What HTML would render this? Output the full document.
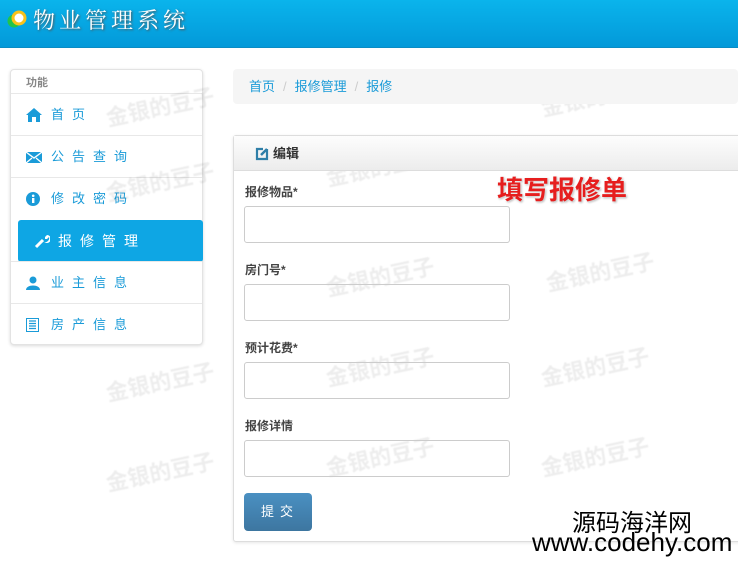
<!DOCTYPE html>
<html><head><meta charset="utf-8"><style>
*{margin:0;padding:0;box-sizing:border-box}
body{width:738px;height:563px;overflow:hidden;background:#fff;font-family:"Liberation Sans","Noto Sans CJK SC",sans-serif;position:relative;font-size:13px}
.hd{position:absolute;left:0;top:0;width:738px;height:48px;background:linear-gradient(#0ab4ec,#0399d9);border-bottom:1px solid #0a8cc4}
.hd .t{position:absolute;left:33px;top:4px;color:#fff;font-family:"Noto Serif CJK SC",serif;font-size:22px;letter-spacing:4px;text-shadow:1px 1px 2px #555}
.side{position:absolute;left:10px;top:69px;width:193px;height:276px;border:1px solid #e3e3e3;border-radius:4px;background:#fff;box-shadow:0 1px 3px rgba(0,0,0,.15)}
.side .cap{position:absolute;left:15px;top:4px;color:#888;font-size:11px;font-weight:bold}
.it{position:absolute;left:0;width:191px;height:42px;border-top:1px solid #e8e8e8;color:#1a9bd8;font-size:13px;letter-spacing:8px;line-height:42px;padding-left:40px}
.it svg{position:absolute;left:15px;top:14px}
.act{left:7px;width:185px;background:#0ea6e4;color:#fff;border-radius:3px;border:none;padding-left:40px;font-size:14px}
.bc{position:absolute;left:233px;top:69px;width:505px;height:35px;background:#f5f5f5;border-radius:4px;color:#1a9bd8;font-size:13px;line-height:36px;padding-left:16px}
.bc span{color:#ccc;margin:0 8px}
.pn{position:absolute;left:233px;top:135px;width:510px;height:407px;border:1px solid #ddd;border-radius:3px;box-shadow:0 1px 3px rgba(0,0,0,.1)}
.ph{height:35px;background:linear-gradient(#fdfdfd,#ececec);border-bottom:1px solid #ddd;color:#333;font-weight:bold;font-size:13px;line-height:35px;padding-left:39px;position:relative}
.ph svg{position:absolute;left:21px;top:11px}
.lb{position:absolute;left:11px;color:#444;font-weight:bold;font-size:12px}
.in{position:absolute;left:10px;width:266px;height:37px;border:1px solid #ccc;border-radius:3px}
.btn{position:absolute;left:10px;top:357px;width:68px;height:38px;border-radius:4px;background:linear-gradient(#4a90c2,#3d76a0);color:#fff;font-size:13px;letter-spacing:6px;text-align:center;line-height:38px;padding-left:4px}
.red{position:absolute;left:497px;top:170px;color:#e61e1e;font-size:26px;font-weight:bold;text-shadow:0 0 3px #fff,1px 1px 2px #999}
.wm{position:absolute;color:rgba(0,0,0,.07);font-size:22px;font-weight:bold;transform:rotate(-12deg);white-space:nowrap;filter:blur(0.6px)}
.cy1{position:absolute;left:572px;top:503px;font-size:24px;color:#000}
.cy2{position:absolute;left:532px;top:527px;font-size:26px;color:#000;line-height:30px}
</style></head><body>
<div class="hd">
<svg style="position:absolute;left:5px;top:8px" width="24" height="24"><circle cx="9" cy="13" r="6.5" fill="#22c44a"/><circle cx="14" cy="10" r="6" fill="#fff" stroke="#f8c21a" stroke-width="3"/></svg>
<div class="t">物业管理系统</div></div>
<div class="side"><div class="cap">功能</div>
<div class="it" style="top:23px"><svg width="16" height="14"><path d="M8 0L0 7h2v7h4V9h4v5h4V7h2z" fill="#1a9bd8"/></svg>首页</div>
<div class="it" style="top:65px"><svg width="16" height="14"><path d="M0 2h16v11H0z" fill="#1a9bd8"/><path d="M0 2l8 6 8-6M0 13l6-5M16 13l-6-5" stroke="#fff" stroke-width="1.3" fill="none"/></svg>公告查询</div>
<div class="it" style="top:107px"><svg width="14" height="14"><circle cx="7" cy="7" r="7" fill="#1a9bd8"/><rect x="6" y="6" width="2.4" height="5" fill="#fff"/><circle cx="7.2" cy="3.8" r="1.3" fill="#fff"/></svg>修改密码</div>
<div class="it act" style="top:150px"><svg width="16" height="16" style="left:16px;top:13px"><path d="M2 14L9 7" stroke="#fff" stroke-width="3"/><path d="M9 7a4 4 0 1 0 4-5l-2 2v2h2l2-2a4 4 0 0 1-5 5" fill="#fff"/></svg>报修管理</div>
<div class="it" style="top:191px"><svg width="14" height="14"><circle cx="7" cy="4" r="3.5" fill="#1a9bd8"/><path d="M0 14c0-6 14-6 14 0z" fill="#1a9bd8"/></svg>业主信息</div>
<div class="it" style="top:233px"><svg width="13" height="14"><rect x="0.5" y="0.5" width="12" height="13" fill="none" stroke="#1a9bd8"/><path d="M3 3h7M3 5.5h7M3 8h7M3 10.5h7" stroke="#1a9bd8" stroke-width="1.3"/></svg>房产信息</div>
</div>
<div class="wm" style="left:105px;top:90px">金银的豆子</div><div class="wm" style="left:325px;top:150px">金银的豆子</div><div class="wm" style="left:540px;top:80px">金银的豆子</div>
<div class="wm" style="left:105px;top:165px">金银的豆子</div><div class="wm" style="left:325px;top:260px">金银的豆子</div><div class="wm" style="left:545px;top:255px">金银的豆子</div>
<div class="wm" style="left:105px;top:365px">金银的豆子</div><div class="wm" style="left:325px;top:350px">金银的豆子</div><div class="wm" style="left:540px;top:350px">金银的豆子</div>
<div class="wm" style="left:105px;top:455px">金银的豆子</div><div class="wm" style="left:325px;top:440px">金银的豆子</div><div class="wm" style="left:540px;top:440px">金银的豆子</div>
<div class="bc">首页<span>/</span>报修管理<span>/</span>报修</div>
<div class="pn"><div class="ph"><svg width="14" height="14"><path d="M12 2v10H2V2h6" fill="none" stroke="#2f7fa8" stroke-width="2.2"/><path d="M6 8l6-6" stroke="#2f7fa8" stroke-width="2.5"/></svg>编辑</div>
<div class="lb" style="top:47px">报修物品*</div><div class="in" style="top:70px"></div>
<div class="lb" style="top:125px">房门号*</div><div class="in" style="top:148px"></div>
<div class="lb" style="top:203px">预计花费*</div><div class="in" style="top:226px"></div>
<div class="lb" style="top:281px">报修详情</div><div class="in" style="top:304px"></div>
<div class="btn">提交</div></div>
<div class="red">填写报修单</div>
<div class="cy1">源码海洋网</div>
<div class="cy2">www.codehy.com</div>
</body></html>
